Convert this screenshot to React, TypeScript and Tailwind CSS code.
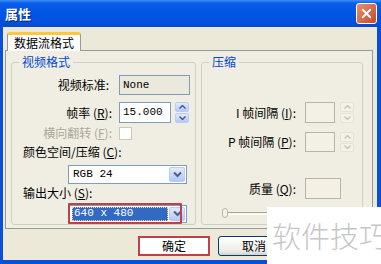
import { X } from 'lucide-react';

function ChevronDown() {
  return (
    <svg width="9" height="7" viewBox="0 0 9 7">
      <path d="M1 1.5 L4.5 5 L8 1.5" fill="none" stroke="#4D6185" strokeWidth="2" />
    </svg>
  );
}

function DropButton() {
  return (
    <div className="w-[16px] h-full flex items-center justify-center rounded-[2px] border border-[#B9CBF3] bg-[linear-gradient(#E1EAFE,#B4C8F5)]">
      <ChevronDown />
    </div>
  );
}

function Spinner({ disabled = false }: { disabled?: boolean }) {
  const c = disabled ? '#C9C7BA' : '#4D6185';
  const box = disabled
    ? 'border-[#E6E3D6] bg-[#F3F1E8]'
    : 'border-[#B9CBF3] bg-[linear-gradient(#E1EAFE,#B4C8F5)]';
  return (
    <div className="w-[14px] h-full flex flex-col gap-px">
      <div className={`flex-1 flex items-center justify-center rounded-[2px] border ${box}`}>
        <svg width="7" height="4" viewBox="0 0 7 4"><path d="M0.5 3.5 L3.5 0.5 L6.5 3.5" fill="none" stroke={c} strokeWidth="1.5" /></svg>
      </div>
      <div className={`flex-1 flex items-center justify-center rounded-[2px] border ${box}`}>
        <svg width="7" height="4" viewBox="0 0 7 4"><path d="M0.5 0.5 L3.5 3.5 L6.5 0.5" fill="none" stroke={c} strokeWidth="1.5" /></svg>
      </div>
    </div>
  );
}

function Group({ title, className, children }: { title: string; className: string; children: React.ReactNode }) {
  return (
    <div className={`relative border border-[#D0D0BF] rounded-[3px] flex flex-col ${className}`}>
      <span className="absolute -top-[9px] left-[7px] px-[3px] bg-[#F0EEE3] text-[#0046D5] text-[12px] leading-[16px]">{title}</span>
      {children}
    </div>
  );
}

const mono = "font-['Liberation_Mono','Noto_Sans_CJK_SC',monospace] text-[11px]";

export default function App() {
  return (
    <div className="w-[381px] h-[264px] relative overflow-hidden flex flex-col bg-[#0A4FD8] font-['Noto_Sans_CJK_SC',sans-serif] text-[12px] text-black">
      {/* title bar */}
      <div className="h-[27px] flex items-center justify-between pl-[5px] pr-[4px] bg-[linear-gradient(#3D8FF5_0%,#0A5DE8_12%,#0055E5_50%,#0050DC_85%,#0A48C8_100%)]">
        <span className="text-white font-bold text-[13px] leading-none [text-shadow:1px_1px_0_#0A246A]">属性</span>
        <div className="w-[21px] h-[21px] rounded-[3px] border border-white flex items-center justify-center bg-[linear-gradient(135deg,#E8906E,#C8492C)]">
          <X className="w-[15px] h-[15px] text-white" strokeWidth={3} />
        </div>
      </div>

      <div className="flex flex-1">
        <div className="w-[3px]" />
        <div className="flex-1 bg-[#ECE9D8] flex flex-col">
          {/* tab */}
          <div className="mt-[5px] ml-[4px] relative z-10 -mb-px w-[74px] h-[19px] bg-[#FCFCFE] border border-b-0 border-[#919B9C] rounded-t-[3px] border-t-[3px] border-t-[#FFC83C] flex items-center justify-center text-[12px] leading-none">
            数据流格式
          </div>
          {/* panel */}
          <div className="ml-[2px] w-[368px] h-[179px] border border-[#919B9C] bg-[#F0EEE3] flex gap-[5px] pl-[5px] pt-[11px]">
            <Group title="视频格式" className="w-[185px] h-[163px]">
              <div className="mt-[12px] flex items-center h-[20px]">
                <span className="w-[100px] text-right pr-[3px]">视频标准:</span>
                <div className={`ml-[7px] w-[71px] h-full border border-[#7F9DB9] bg-[#EBE9DD] flex items-center px-[3px] ${mono}`}>None</div>
              </div>
              <div className="mt-[7px] flex items-center h-[21px]">
                <span className="w-[100px] text-right">帧率 (<u>R</u>):</span>
                <div className={`ml-[7px] w-[52px] h-full border border-[#7F9DB9] bg-white flex items-center px-[3px] ${mono}`}>15.000</div>
                <div className="ml-[4px] h-full"><Spinner /></div>
              </div>
              <div className="mt-[2px] flex items-center h-[16px]">
                <span className="w-[100px] text-right text-[#ACA899]">横向翻转 (<u>F</u>):</span>
                <div className="ml-[7px] w-[13px] h-[13px] border border-[#CAC8BB] bg-white" />
              </div>
              <div className="mt-[3px] flex items-center h-[16px] pl-[11px]">颜色空间/压缩 (<u>C</u>):</div>
              <div className="mt-[5px] ml-[56px] w-[119px] h-[19px] border border-[#7F9DB9] bg-white flex items-center p-px">
                <span className={`flex-1 pl-[3px] ${mono}`}>RGB 24</span>
                <DropButton />
              </div>
              <div className="mt-[1px] flex items-center h-[16px] pl-[11px]">输出大小 (<u>S</u>):</div>
              <div className="mt-[2px] ml-[56px] relative w-[119px] h-[21px] flex items-center">
                <div className="w-full h-[18px] border border-[#7F9DB9] bg-white flex items-center p-px">
                  <span className={`ml-[2px] w-[96px] h-full bg-[#316AC5] text-white border border-dotted border-[#FFD58A] flex items-center pl-px ${mono}`}>640 x 480</span>
                  <span className="flex-1" />
                  <DropButton />
                </div>
                <div className="absolute left-0 top-0 w-[114px] h-[21px] border-2 border-[#C0404A] rounded-[1px]" />
              </div>
            </Group>
            <Group title="压缩" className="w-[162px] h-[163px]">
              <div className="mt-[39px] flex items-center h-[21px]">
                <span className="w-[94px] text-right">I 帧间隔 (<u>I</u>):</span>
                <div className="ml-[9px] w-[30px] h-full border border-[#B4B5AC] bg-[#F4F0E4]" />
                <div className="ml-[5px] h-full"><Spinner disabled /></div>
              </div>
              <div className="mt-[9px] flex items-center h-[20px]">
                <span className="w-[94px] text-right">P 帧间隔 (<u>P</u>):</span>
                <div className="ml-[9px] w-[30px] h-full border border-[#B4B5AC] bg-[#F4F0E4]" />
                <div className="ml-[5px] h-full"><Spinner disabled /></div>
              </div>
              <div className="mt-[26px] flex items-center h-[21px]">
                <span className="w-[94px] text-right">质量 (<u>Q</u>):</span>
                <div className="ml-[9px] w-[36px] h-full border border-[#B4B5AC] bg-[#F4F0E4]" />
              </div>
              <div className="mt-[9px] ml-[20px] w-[130px] h-[10px] flex items-center relative">
                <div className="w-full h-[3px] border-t border-[#A8A79C] bg-[#F4F3EE] border-b border-b-white" />
                <div className="absolute left-0 top-0 w-[6px] h-[10px] rounded-[3px] border border-[#B9B7A8] bg-[#F2F1EA]" />
              </div>
            </Group>
          </div>
          {/* buttons */}
          <div className="mt-[7px] ml-[135px] flex gap-[8px]">
            <div className="w-[72px] h-[20px] border-2 border-[#C0404A] bg-white flex items-center justify-center text-[12px] leading-none">确定</div>
            <div className="w-[72px] h-[20px] border border-[#003C74] rounded-[3px] bg-[linear-gradient(#FFFFFF,#ECEBE6_80%,#D6D0C5)] flex items-center justify-center text-[12px] leading-none">取消</div>
            <div className="w-[72px] h-[20px] border border-[#003C74] rounded-[3px] bg-[linear-gradient(#FFFFFF,#ECEBE6_80%,#D6D0C5)]" />
          </div>
        </div>
        <div className="w-[4px]" />
      </div>
      <div className="h-[4px]" />

      {/* watermark */}
      <div className="absolute left-[267px] top-[207px] w-[114px] h-[57px] bg-white flex items-center pl-[5px] overflow-hidden">
        <span className="whitespace-nowrap text-[29px] leading-none text-[#C6C6C6] font-light">软件技巧</span>
      </div>
    </div>
  );
}
